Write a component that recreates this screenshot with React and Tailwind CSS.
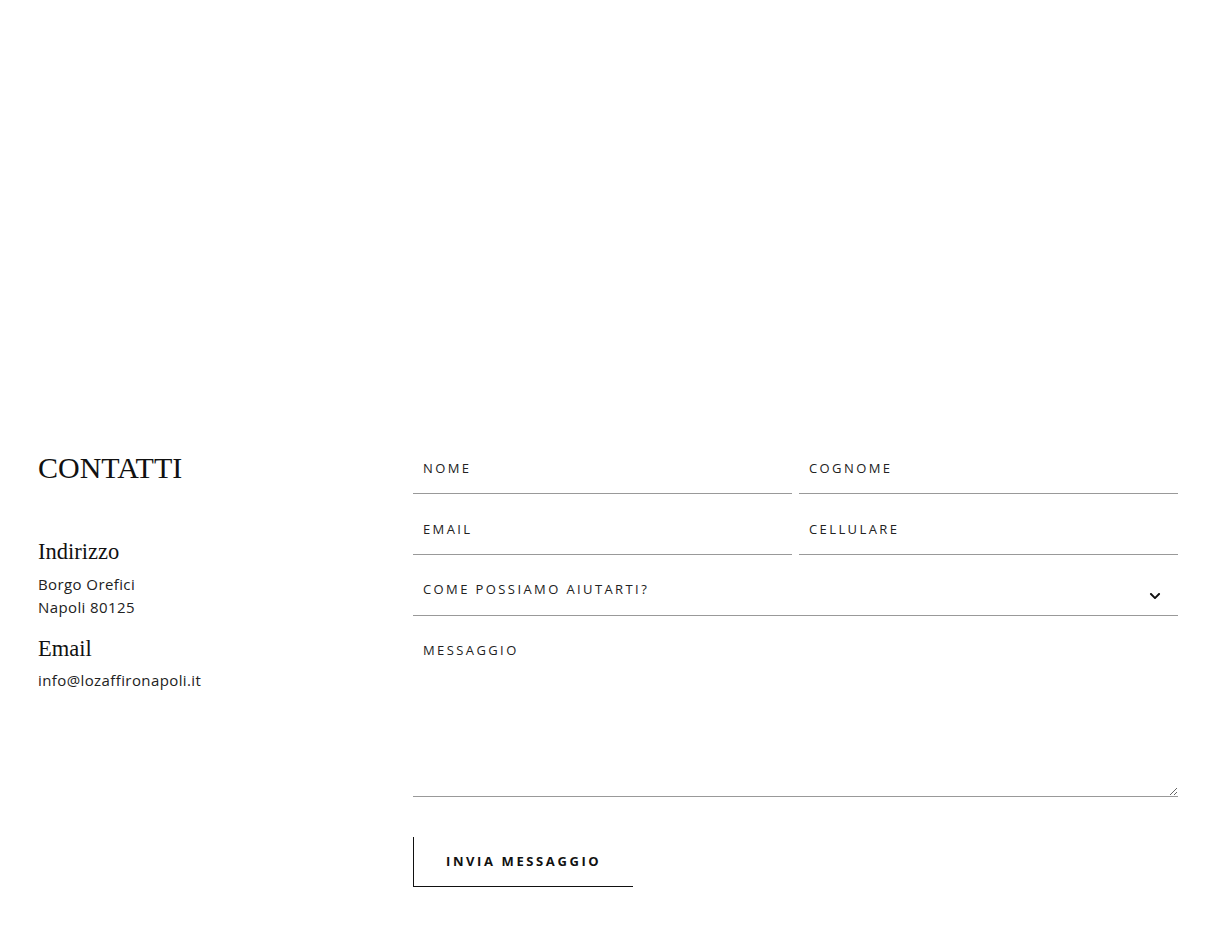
import { FaChevronDown } from 'react-icons/fa';

const serif = { fontFamily: '"Liberation Serif", "Times New Roman", serif' };

function Field({ placeholder, type = 'text' }) {
  return (
    <input
      type={type}
      placeholder={placeholder}
      className="h-[50px] w-full border-b border-[#999] bg-transparent px-[10px] pb-[1px] text-[13px] tracking-[2.4px] text-[#222] outline-none placeholder:text-[#222] placeholder:uppercase"
    />
  );
}

export default function App() {
  return (
    <div className="min-h-[950px] bg-white text-[#222] font-['Open_Sans',sans-serif]">
      {/* empty hero area */}
      <div className="h-[444px]" />

      <section className="grid grid-cols-[375px_1fr] px-[38px]">
        {/* Left column */}
        <div className="-mt-[1px]">
          <h2 style={serif} className="text-[30px] leading-[50px] text-[#111]">CONTATTI</h2>

          <div className="mt-[44px]">
            <h3 style={serif} className="text-[22.5px] leading-[30px] text-[#111]">Indirizzo</h3>
            <p className="mt-[6px] text-[15px] leading-[23px] tracking-[0.4px]">
              Borgo Orefici<br />Napoli 80125
            </p>
          </div>

          <div className="mt-[15px]">
            <h3 style={serif} className="text-[22.5px] leading-[30px] text-[#111]">Email</h3>
            <p className="mt-[5px] text-[15px] leading-[23px] tracking-[0.4px]">info@lozaffironapoli.it</p>
          </div>
        </div>

        {/* Form */}
        <form className="flex flex-col">
          <div className="grid grid-cols-2 gap-x-[7px] gap-y-[11px]">
            <Field placeholder="NOME" />
            <Field placeholder="COGNOME" />
            <Field placeholder="EMAIL" type="email" />
            <Field placeholder="CELLULARE" type="tel" />
          </div>

          <div className="relative mt-[11px]">
            <select
              defaultValue=""
              className="h-[50px] w-full appearance-none border-b border-[#999] bg-transparent px-[10px] pb-[1px] text-[13px] tracking-[2.4px] text-[#222] outline-none"
            >
              <option value="" disabled>COME POSSIAMO AIUTARTI?</option>
              <option>Informazioni</option>
              <option>Prenotazione</option>
            </select>
            <FaChevronDown className="pointer-events-none absolute right-[17px] top-[24px] h-[12px] w-[12px] text-[#111]" />
          </div>

          <textarea
            placeholder="MESSAGGIO"
            className="mt-[11px] h-[170px] w-full border-b border-[#999] bg-transparent px-[10px] pt-[14px] text-[13px] tracking-[2.4px] text-[#222] outline-none placeholder:text-[#222]"
          />

          <div className="mt-[40px]">
            <button
              type="button"
              className="h-[50px] w-[220px] border-l border-b border-[#111] pl-[32px] text-left text-[13px] font-bold tracking-[2.6px] text-[#111]"
            >
              INVIA MESSAGGIO
            </button>
          </div>
        </form>
      </section>
    </div>
  );
}
